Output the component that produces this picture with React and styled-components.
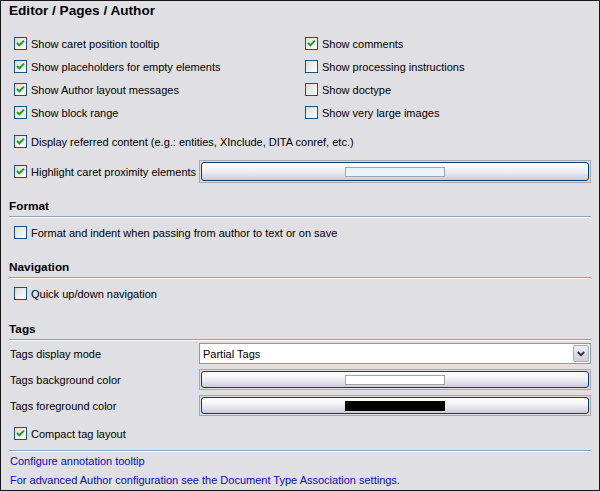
import React from "react";
import styled, { createGlobalStyle } from "styled-components";

const GlobalStyle = createGlobalStyle`
  html, body {
    margin: 0;
    padding: 0;
    background: #e0dfe3;
  }
  body {
    font-family: "Liberation Sans", Arial, sans-serif;
    font-size: 11px;
    color: #000;
  }
`;

const Frame = styled.div`
  box-sizing: border-box;
  width: 600px;
  height: 491px;
  border: 1px solid #141414;
  padding: 0 8px;
  background: #e0dfe3;
  display: flex;
  flex-direction: column;
`;

const Title = styled.div`
  font-weight: bold;
  font-size: 13.6px;
  line-height: 19px;
  margin-bottom: 12px;
`;

const CheckGrid = styled.div`
  display: grid;
  grid-template-columns: 291px 1fr;
  grid-auto-rows: 23px;
  padding-left: 5px;
`;

const CheckRow = styled.label`
  display: flex;
  align-items: center;
  gap: 4px;
  height: 23px;
  white-space: nowrap;
  margin-top: ${props => props.top || 0}px;
  padding-left: ${props => props.indent || 0}px;
`;

const Box = styled.span`
  box-sizing: border-box;
  flex: none;
  width: 13px;
  height: 13px;
  border: 1px solid #1c5180;
  background: linear-gradient(135deg, #dcdcd7 0%, #f2f2ee 60%, #ffffff 100%);
  display: flex;
  align-items: center;
  justify-content: center;
`;

const FieldGrid = styled.div`
  display: grid;
  grid-template-columns: 190px 1fr;
  grid-auto-rows: ${props => props.rowHeight}px;
  row-gap: 5px;
  align-items: center;
  margin-top: ${props => props.top || 0}px;
`;

const FieldLabel = styled.div`
  padding-left: 1px;
  white-space: nowrap;
`;

const SectionTitle = styled.div`
  font-weight: bold;
  font-size: 11.8px;
  line-height: 19px;
  margin-top: ${props => props.top}px;
  border-bottom: 1px solid #8ea4bd;
  box-shadow: 0 1px 0 #ffffff;
`;

const Divider = styled.div`
  margin-top: 5px;
  height: 0;
  border-bottom: 1px solid #8ea4bd;
  box-shadow: 0 1px 0 #ffffff;
`;

const ColorOuter = styled.div`
  box-sizing: border-box;
  height: 100%;
  border: 1px solid #a7a6ae;
  padding: 1px;
  display: flex;
`;

const ColorInner = styled.div`
  box-sizing: border-box;
  flex: 1;
  border: 1px solid #003c74;
  border-radius: 3px;
  background: linear-gradient(#ffffff 0%, #f5f5f8 35%, #e2e1ea 70%, #cbcad8 100%);
  display: flex;
  align-items: center;
  justify-content: center;
`;

const Swatch = styled.span`
  box-sizing: border-box;
  width: 100px;
  height: 10px;
  border: 1px solid ${props => props.edge};
  background: ${props => props.fill};
`;

const Combo = styled.div`
  box-sizing: border-box;
  height: 21px;
  border: 1px solid #7f9db9;
  background: #ffffff;
  display: flex;
  align-items: center;
  padding: 1px;
`;

const ComboText = styled.span`
  flex: 1;
  padding-left: 2px;
`;

const ComboButton = styled.span`
  box-sizing: border-box;
  width: 16px;
  height: 17px;
  border: 1px solid #a9a9bd;
  border-radius: 2px;
  background: linear-gradient(#eeeef4, #cfcfdc);
  display: flex;
  align-items: center;
  justify-content: center;
`;

const Links = styled.div`
  margin-top: 1px;
  display: flex;
  flex-direction: column;
`;

const Link = styled.a`
  color: #0b0bbf;
  text-decoration: none;
  line-height: ${props => props.h}px;
  padding-left: 1px;
  cursor: pointer;
`;

const Check = ({ checked }) => (
  <Box>
    {checked ? (
      <svg width="9" height="9" viewBox="0 0 9 9">
        <path d="M1 4 L3.3 6.3 L8 1.6" fill="none" stroke="#21a121" strokeWidth="2" />
      </svg>
    ) : null}
  </Box>
);

const CheckItem = ({ checked, children, ...props }) => (
  <CheckRow {...props}>
    <Check checked={checked} />
    <span>{children}</span>
  </CheckRow>
);

const ColorButton = ({ fill, edge }) => (
  <ColorOuter>
    <ColorInner>
      <Swatch fill={fill} edge={edge} />
    </ColorInner>
  </ColorOuter>
);

export default function App() {
  return (
    <>
      <GlobalStyle />
      <Frame>
        <Title>Editor / Pages / Author</Title>

        <CheckGrid>
          <CheckItem checked>Show caret position tooltip</CheckItem>
          <CheckItem checked>Show comments</CheckItem>
          <CheckItem checked>Show placeholders for empty elements</CheckItem>
          <CheckItem>Show processing instructions</CheckItem>
          <CheckItem checked>Show Author layout messages</CheckItem>
          <CheckItem>Show doctype</CheckItem>
          <CheckItem checked>Show block range</CheckItem>
          <CheckItem>Show very large images</CheckItem>
        </CheckGrid>

        <CheckItem checked top={6} indent={5}>
          Display referred content (e.g.: entities, XInclude, DITA conref, etc.)
        </CheckItem>

        <FieldGrid rowHeight={23} top={7}>
          <CheckItem checked indent={5}>Highlight caret proximity elements</CheckItem>
          <ColorButton fill="#eaf4fc" edge="#9ea6b6" />
        </FieldGrid>

        <SectionTitle top={14}>Format</SectionTitle>
        <CheckItem top={4} indent={5}>
          Format and indent when passing from author to text or on save
        </CheckItem>

        <SectionTitle top={14}>Navigation</SectionTitle>
        <CheckItem top={4} indent={5}>Quick up/down navigation</CheckItem>

        <SectionTitle top={15}>Tags</SectionTitle>
        <FieldGrid rowHeight={21} top={3}>
          <FieldLabel>Tags display mode</FieldLabel>
          <Combo>
            <ComboText>Partial Tags</ComboText>
            <ComboButton>
              <svg width="8" height="6" viewBox="0 0 8 6">
                <path d="M0.8 1 L4 4.2 L7.2 1" fill="none" stroke="#2e3340" strokeWidth="1.8" />
              </svg>
            </ComboButton>
          </Combo>
          <FieldLabel>Tags background color</FieldLabel>
          <ColorButton fill="#ffffff" edge="#a4a4a8" />
          <FieldLabel>Tags foreground color</FieldLabel>
          <ColorButton fill="#000000" edge="#000000" />
        </FieldGrid>

        <CheckItem checked top={6} indent={5}>Compact tag layout</CheckItem>

        <Divider />
        <Links>
          <Link h={18}>Configure annotation tooltip</Link>
          <Link h={20}>For advanced Author configuration see the Document Type Association settings.</Link>
        </Links>
      </Frame>
    </>
  );
}
